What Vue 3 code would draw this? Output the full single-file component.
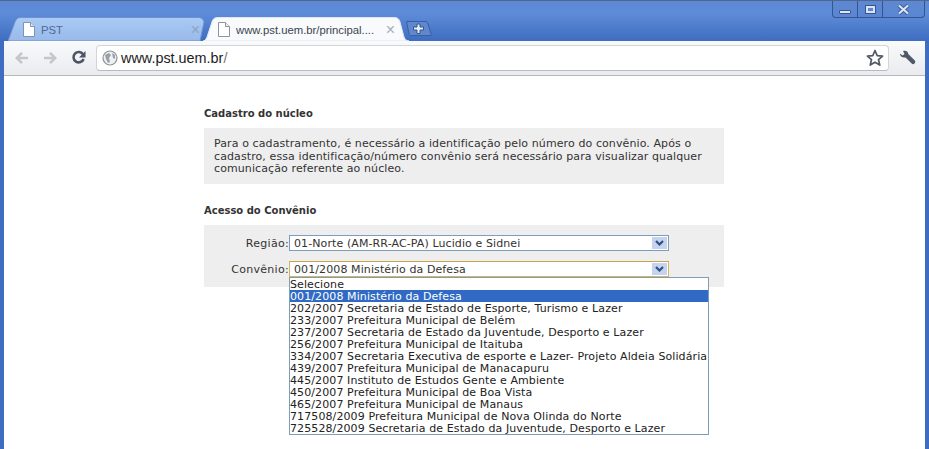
<script setup>
const convenios = [
  'Selecione',
  '001/2008 Ministério da Defesa',
  '202/2007 Secretaria de Estado de Esporte, Turismo e Lazer',
  '233/2007 Prefeitura Municipal de Belém',
  '237/2007 Secretaria de Estado da Juventude, Desporto e Lazer',
  '256/2007 Prefeitura Municipal de Itaituba',
  '334/2007 Secretaria Executiva de esporte e Lazer- Projeto Aldeia Solidária',
  '439/2007 Prefeitura Municipal de Manacapuru',
  '445/2007 Instituto de Estudos Gente e Ambiente',
  '450/2007 Prefeitura Municipal de Boa Vista',
  '465/2007 Prefeitura Municipal de Manaus',
  '717508/2009 Prefeitura Municipal de Nova Olinda do Norte',
  '725528/2009 Secretaria de Estado da Juventude, Desporto e Lazer'
]
const selected = 1
</script>

<template>
  <div class="window">
    <!-- Tab strip -->
    <div class="tabstrip">
      <div class="tab tab-inactive">
        <svg class="tab-shape" width="206" height="24" viewBox="0 0 206 24">
          <defs>
            <linearGradient id="tabOff" x1="0" y1="0" x2="0" y2="1">
              <stop offset="0" stop-color="#aacbf5" />
              <stop offset="1" stop-color="#98b9ea" />
            </linearGradient>
          </defs>
          <path d="M0 24 L7 5 C8.500 1.500 10 .5 13 .5 H190 C193 .5 195 1.500 196 5 L192 24 Z" fill="url(#tabOff)" stroke="#6f93cc" />
        </svg>
        <svg class="page-icon" width="12" height="15" viewBox="0 0 12 15">
          <path d="M.5.5H7.500L11.500 4.500V14.500H.5Z" fill="#fff" stroke="#7f93b3" />
          <path d="M7.500 .5V4.500H11.500" fill="#dfe6f0" stroke="#7f93b3" />
        </svg>
        <span class="tab-title">PST</span>
        <span class="tab-close">×</span>
      </div>
      <div class="tab tab-active">
        <svg class="tab-shape" width="206" height="24" viewBox="0 0 206 24">
          <path d="M0 24 C2 24 3 22 4 20 L9 5 C10 1.500 12 .5 15 .5 H191 C194 .5 196 1.500 197 5 L201 20 C202 22 203 24 206 24 Z" fill="#f8fafc" stroke="#dfe7f2" />
        </svg>
        <svg class="page-icon" width="12" height="15" viewBox="0 0 12 15">
          <path d="M.5.5H7.500L11.500 4.500V14.500H.5Z" fill="#fff" stroke="#8f959e" />
          <path d="M7.500 .5V4.500H11.500" fill="#eceef1" stroke="#8f959e" />
        </svg>
        <span class="tab-title">www.pst.uem.br/principal....</span>
        <span class="tab-close">×</span>
      </div>
      <div class="new-tab">
        <svg width="26" height="15" viewBox="0 0 26 15">
          <path d="M.5.5H19C21 .5 21.500 1.500 22 3L25.500 14.500H5C4 14.500 3.500 14 3 12.500Z" fill="#6088cf" stroke="#3a5f9f" />
          <path d="M11 3H14V6H17.500V9H14V12.500H11V9H7.500V6H11Z" fill="#e6eefa" stroke="#35558c" />
        </svg>
      </div>
    </div>

    <div class="win-buttons">
      <div class="win-btn btn-min"><span class="min-bar"></span></div>
      <div class="win-btn btn-max"><span class="max-box"></span></div>
      <div class="win-btn btn-close">
        <svg width="13" height="11" viewBox="0 0 13 11">
          <path d="M2 1.500L11 9.500M11 1.500L2 9.500" stroke="#3a5c96" stroke-width="4" fill="none" />
          <path d="M2 1.500L11 9.500M11 1.500L2 9.500" stroke="#d9e3f3" stroke-width="2.200" fill="none" />
        </svg>
      </div>
    </div>

    <!-- Toolbar -->
    <div class="toolbar">
      <svg class="nav-icon" width="14" height="12" viewBox="0 0 16 14">
        <path d="M8 1L2 7L8 13M2.500 7H15" stroke="#c3c7cc" stroke-width="3" fill="none" />
      </svg>
      <svg class="nav-icon nav-forward" width="14" height="12" viewBox="0 0 16 14">
        <path d="M8 1L14 7L8 13M13.500 7H1" stroke="#c3c7cc" stroke-width="3" fill="none" />
      </svg>
      <svg class="nav-icon nav-reload" width="15" height="15" viewBox="0 0 15 15">
        <path d="M12 4.200A5.200 5.200 0 1 0 12.600 9" stroke="#4b5563" stroke-width="2.600" fill="none" />
        <path d="M14.500 1V7.500H8Z" fill="#4b5563" />
      </svg>
      <div class="omnibox">
        <svg width="16" height="16" viewBox="0 0 16 16">
          <circle cx="8" cy="8" r="7" fill="#eef0f3" stroke="#8d939b" stroke-width="1.200" />
          <path d="M3 5L7 3L9 5L7 8L8 12L6 13L4 9Z M10 3L13 5L13 9L11 8Z" fill="#9aa0a8" />
        </svg>
        <span class="url">www.pst.uem.br<span class="url-path">/</span></span>
        <svg class="star" width="18" height="18" viewBox="0 0 18 18">
          <path d="M9 1.500L11.200 6.600L16.600 7.100L12.500 10.700L13.800 16.100L9 13.200L4.200 16.100L5.500 10.700L1.400 7.100L6.800 6.600Z" fill="#fff" stroke="#4f5a68" stroke-width="1.700" stroke-linejoin="round" />
        </svg>
      </div>
      <svg class="wrench" width="17" height="16" viewBox="0 0 17 16">
        <path d="M1 3.500L3.500 5.500L5.500 4L4 1C6.500 .2 9 1 9.300 4L15.800 10.500C16.500 11.300 16.500 12.500 15.500 13.500C14.500 14.400 13.400 14.300 12.700 13.600L6.500 7.500C3.500 8 .8 6.500 1 3.500Z" fill="#4f5a68" />
      </svg>
    </div>

    <!-- Page -->
    <div class="viewport">
      <div class="content">
        <h2 class="title">Cadastro do núcleo</h2>
        <div class="info-box">
          Para o cadastramento, é necessário a identificação pelo número do convênio. Após o
          cadastro, essa identificação/número convênio será necessário para visualizar qualquer
          comunicação referente ao núcleo.
        </div>

        <h2 class="title title-second">Acesso do Convênio</h2>
        <div class="form-box">
          <div class="form-row">
            <label class="form-label">Região:</label>
            <div class="select">
              <span class="select-value">01-Norte (AM-RR-AC-PA) Lucidio e Sidnei</span>
              <span class="select-arrow">
                <svg width="9" height="7" viewBox="0 0 9 7">
                  <path d="M1 1L4.500 4.500L8 1" stroke="#2f4f86" stroke-width="2.200" fill="none" />
                </svg>
              </span>
            </div>
          </div>
          <div class="form-row">
            <label class="form-label">Convênio:</label>
            <div class="select select-open">
              <span class="select-value">{{ convenios[selected] }}</span>
              <span class="select-arrow">
                <svg width="9" height="7" viewBox="0 0 9 7">
                  <path d="M1 1L4.500 4.500L8 1" stroke="#2f4f86" stroke-width="2.200" fill="none" />
                </svg>
              </span>
              <ul class="dropdown">
                <li
                  v-for="(item, i) in convenios"
                  :key="item"
                  :class="{ active: i === selected }"
                >{{ item }}</li>
              </ul>
            </div>
          </div>
        </div>
      </div>
    </div>
  </div>
</template>

<style>
html, body {
  margin: 0;
  overflow: hidden;
}
</style>

<style scoped>
.window {
  position: relative;
  width: 929px;
  height: 449px;
  box-sizing: border-box;
  padding: 0 4px;
  display: flex;
  flex-direction: column;
  overflow: hidden;
  border-top: 1px solid #4a6890;
  background: linear-gradient(#5d88d4 0, #5f8cd9 12px, #3d6cc0 41px, #3d6cc0 100%);
}

.tabstrip {
  height: 40px;
  display: flex;
  align-items: flex-end;
  flex: none;
}

.tab {
  position: relative;
  width: 206px;
  height: 24px;
  margin-right: -11px;
  display: flex;
  align-items: center;
  padding: 1px 14px 0 15px;
  box-sizing: border-box;
  font-family: "Liberation Sans", Arial, sans-serif;
  font-size: 11.3px;
  flex: none;
}

.tab-inactive {
  margin-left: 4px;
  color: #4e6a90;
}

.tab-active {
  color: #3c4450;
}

.tab-shape {
  position: absolute;
  left: 0;
  top: 0;
}

.page-icon,
.tab-title,
.tab-close {
  position: relative;
  flex: none;
}

.tab-title {
  margin-left: 6px;
  flex: 1;
  white-space: nowrap;
}

.tab-close {
  font-size: 16px;
  color: #8fa3bd;
}

.tab-active .tab-close {
  color: #a9aeb5;
}

.new-tab {
  margin: 0 0 5px 8px;
  width: 26px;
  height: 15px;
  flex: none;
  display: flex;
}

.win-buttons {
  position: absolute;
  top: 0;
  right: 4px;
  height: 16px;
  display: flex;
  border: 1px solid #34558d;
  border-top: 0;
  border-radius: 0 0 4px 4px;
  background: linear-gradient(#5f88d0, #5a86d4);
}

.win-btn {
  height: 16px;
  box-sizing: border-box;
  display: flex;
  align-items: center;
  justify-content: center;
  border-right: 1px solid #34558d;
}

.btn-min { width: 25px; }
.btn-max { width: 25px; }
.btn-close { width: 41px; border-right: 0; }

.min-bar {
  width: 10px;
  height: 2px;
  margin-top: 5px;
  background: #dfe7f4;
  border: 1px solid #35558c;
  border-radius: 1px;
}

.max-box {
  width: 5px;
  height: 3px;
  border: 2px solid #d9e3f3;
  outline: 1px solid #35558c;
}

.toolbar {
  height: 35px;
  flex: none;
  box-sizing: border-box;
  display: flex;
  align-items: center;
  padding: 2px 9px 3px 11px;
  background: linear-gradient(#f8fafc, #e9ebee);
  border-bottom: 1px solid #b4b8bd;
}

.nav-forward {
  margin-left: 14px;
}

.nav-reload {
  margin-left: 14px;
}

.omnibox {
  margin-left: 10px;
  flex: 1;
  height: 26px;
  box-sizing: border-box;
  display: flex;
  align-items: center;
  padding: 0 4px 0 5px;
  background: #fff;
  border: 1px solid #d2d4d8;
  border-bottom-color: #b8babd;
  border-radius: 4px;
}

.url {
  margin-left: 3px;
  padding-top: 1px;
  flex: 1;
  font-family: "Liberation Sans", Arial, sans-serif;
  font-size: 14.4px;
  color: #1c1c1c;
}

.url-path {
  color: #777;
}

.wrench {
  margin-left: 10px;
}

.viewport {
  flex: 1;
  background: #fff;
  display: flex;
}

.content {
  width: 520px;
  margin-left: 200px;
  padding-top: 31px;
  font-family: "DejaVu Sans", Verdana, sans-serif;
  font-size: 11px;
  line-height: 12px;
  letter-spacing: .1px;
  color: #333;
}

.title {
  margin: 0;
  font-size: 10px;
  line-height: 14px;
  font-weight: bold;
  letter-spacing: 0;
  color: #333;
}

.title-second {
  margin-top: 20px;
}

.info-box {
  margin-top: 7px;
  padding: 10px 10px 9px;
  height: 37px;
  line-height: 12.5px;
  background: #eeeeee;
}

.form-box {
  margin-top: 7px;
  height: 62px;
  box-sizing: border-box;
  padding-top: 10px;
  background: #eeeeee;
  display: flex;
  flex-direction: column;
  gap: 10px;
}

.form-row {
  display: flex;
  align-items: center;
  height: 16px;
}

.form-label {
  width: 85px;
  padding-top: 1px;
  text-align: right;
  letter-spacing: .3px;
}

.select {
  position: relative;
  width: 380px;
  height: 16px;
  box-sizing: border-box;
  display: flex;
  align-items: center;
  justify-content: space-between;
  background: #fff;
  border: 1px solid #7f9db9;
  padding-left: 4px;
}

.select-value {
  padding-top: 1px;
}

.select-open {
  border-color: #d8b45c;
  border-top-color: #c9a24a;
}

.select-arrow {
  width: 15px;
  height: 12px;
  margin-right: 1px;
  background: #c4d3ee;
  display: flex;
  align-items: center;
  justify-content: center;
}

.dropdown {
  position: absolute;
  left: -1px;
  top: 15px;
  width: 420px;
  margin: 0;
  padding: 0;
  list-style: none;
  box-sizing: border-box;
  background: #fff;
  border: 1px solid #7f9db9;
  color: #222;
  z-index: 2;
}

.dropdown li {
  height: 12px;
  line-height: 14px;
  white-space: nowrap;
}

.dropdown li.active {
  background: #316ac5;
  color: #fff;
}
</style>
